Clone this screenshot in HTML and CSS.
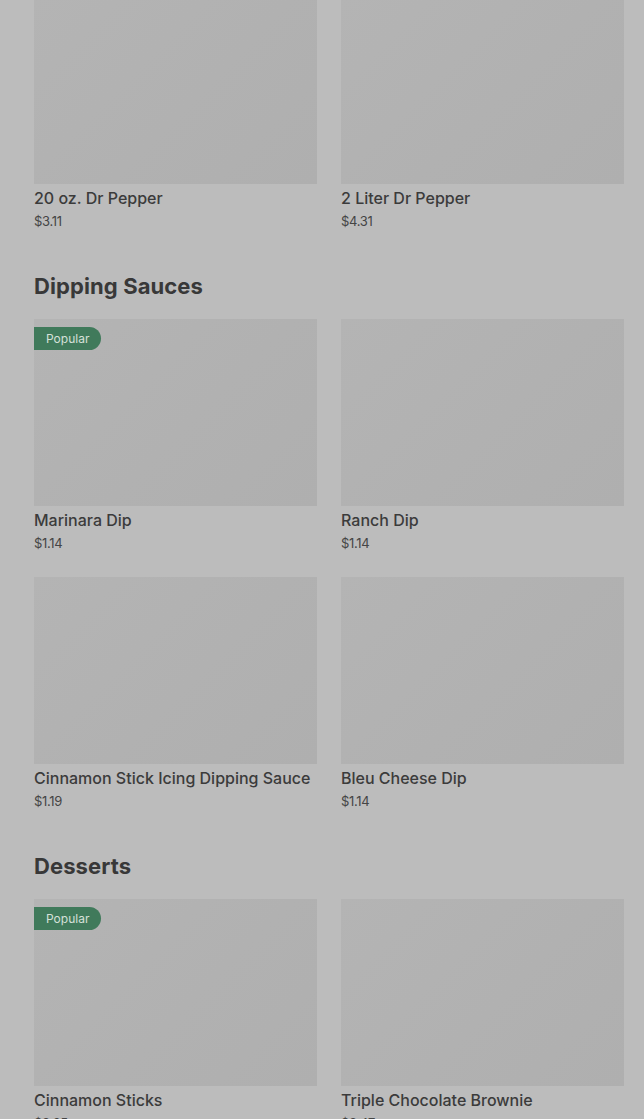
FILE: index.html
```html
<!DOCTYPE html>
<html lang="en">
<head>
  <meta charset="UTF-8">
  <meta name="viewport" content="width=device-width, initial-scale=1.0">
  <title>Menu</title>
  <link rel="stylesheet" href="styles.css">
</head>
<body>
  <div class="menu">
    <!-- Drinks (scrolled past) -->
    <section class="section section-partial">
      <div class="grid">
        <div class="item">
          <div class="item-image"></div>
          <div class="item-name">20 oz. Dr Pepper</div>
          <div class="item-price">$3.11</div>
        </div>
        <div class="item">
          <div class="item-image"></div>
          <div class="item-name">2 Liter Dr Pepper</div>
          <div class="item-price">$4.31</div>
        </div>
      </div>
    </section>

    <!-- Dipping Sauces -->
    <section class="section">
      <h2 class="section-title">Dipping Sauces</h2>
      <div class="grid">
        <div class="item">
          <div class="item-image"><span class="badge">Popular</span></div>
          <div class="item-name">Marinara Dip</div>
          <div class="item-price">$1.14</div>
        </div>
        <div class="item">
          <div class="item-image"></div>
          <div class="item-name">Ranch Dip</div>
          <div class="item-price">$1.14</div>
        </div>
        <div class="item">
          <div class="item-image"></div>
          <div class="item-name">Cinnamon Stick Icing Dipping Sauce</div>
          <div class="item-price">$1.19</div>
        </div>
        <div class="item">
          <div class="item-image"></div>
          <div class="item-name">Bleu Cheese Dip</div>
          <div class="item-price">$1.14</div>
        </div>
      </div>
    </section>

    <!-- Desserts -->
    <section class="section">
      <h2 class="section-title">Desserts</h2>
      <div class="grid">
        <div class="item">
          <div class="item-image"><span class="badge">Popular</span></div>
          <div class="item-name">Cinnamon Sticks</div>
          <div class="item-price">$3.65</div>
        </div>
        <div class="item">
          <div class="item-image"></div>
          <div class="item-name">Triple Chocolate Brownie</div>
          <div class="item-price">$3.47</div>
        </div>
      </div>
    </section>
  </div>
</body>
</html>
```

FILE: styles.css
```css
* {
  margin: 0;
  padding: 0;
  box-sizing: border-box;
}

body {
  font-family: Inter, "Noto Sans", Arial, sans-serif;
  background-color: #bcbcbc;
  color: #3b3b3b;
  overflow: hidden;
}

.menu {
  padding: 0 20px 0 34px;
  margin-top: -3px; /* page is scrolled a little */
}

.section + .section {
  margin-top: 40px;
}

.section-title {
  font-size: 22px;
  line-height: 28px;
  font-weight: 700;
  letter-spacing: 0.1px;
  color: #383838;
  margin-bottom: 19px;
}

.grid {
  display: grid;
  grid-template-columns: 1fr 1fr;
  column-gap: 24px;
  row-gap: 23px;
}

.item-image {
  position: relative;
  height: 187px;
  background: linear-gradient(135deg, #b4b4b4 0%, #b1b1b1 55%, #afafaf 100%);
}

.badge {
  position: absolute;
  top: 8px;
  left: 0;
  height: 23px;
  line-height: 23px;
  padding: 0 12px;
  border-radius: 0 12px 12px 0;
  background-color: #407a5b;
  color: #d6e0d9;
  font-size: 12px;
}

.item-name {
  margin-top: 2px;
  font-size: 16px;
  line-height: 24px;
  font-weight: 500;
  white-space: nowrap;
}

.item-price {
  font-size: 13px;
  line-height: 22px;
  letter-spacing: -0.3px;
  color: #454545;
}
```
